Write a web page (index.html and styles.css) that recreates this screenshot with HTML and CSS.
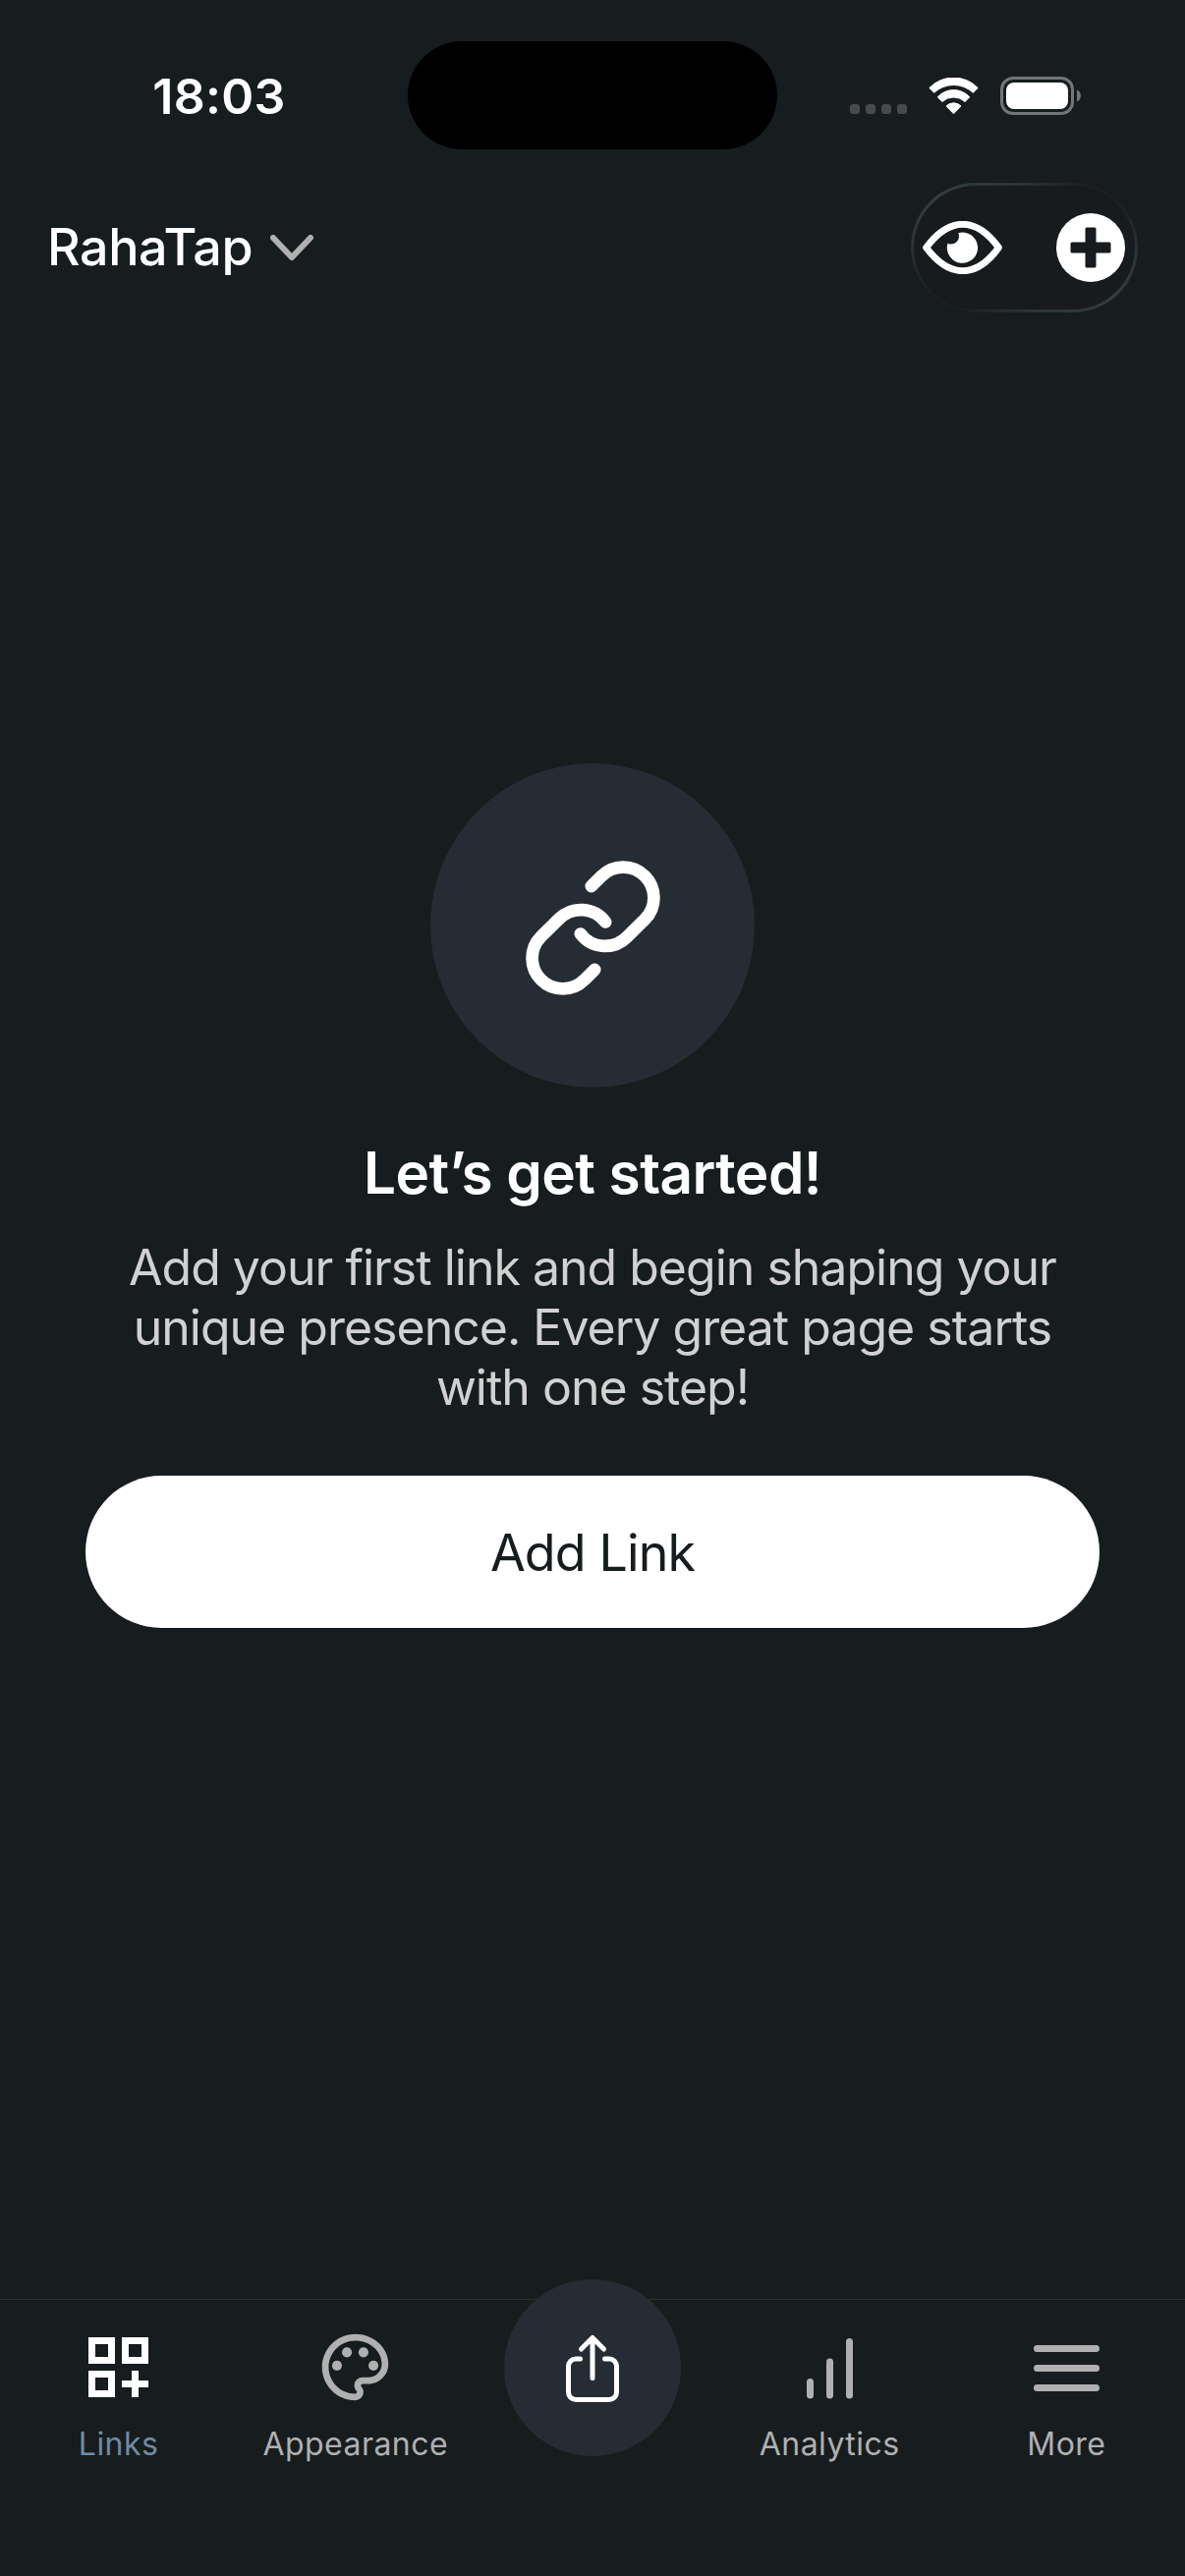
FILE: index.html
```
<!DOCTYPE html>
<html lang="en">

<head>
    <meta charset="UTF-8">
    <meta name="viewport" content="width=device-width, initial-scale=1.0">
    <title>RahaTap</title>
    <link rel="stylesheet" href="styles.css">
</head>

<body>
    <div class="status-bar">
        <div class="time">18:03</div>
        <div class="island"></div>
        <div class="status-icons">
            <div class="signal">
                <span></span><span></span><span></span><span></span>
            </div>
            <svg class="wifi" viewBox="0 0 51 38" fill="#fff" stroke="#fff" stroke-width="1" stroke-linejoin="round">
                <path d="M0.8 10.5A34.3 34.3 0 0 1 50.2 10.5L45.3 15.3A29 29 0 0 0 5.7 15.3Z" />
                <path d="M9.2 19.8A22 22 0 0 1 41.8 19.8L37 24.5A17 17 0 0 0 14 24.5Z" />
                <path d="M18 29A10.5 10.5 0 0 1 33 29L25.5 36.7Z" />
            </svg>
            <svg class="battery" viewBox="0 0 83 39">
                <rect x="1.5" y="1.5" width="72" height="36" rx="11.5" fill="none" stroke="#727577" stroke-width="3" />
                <rect x="6" y="6" width="63" height="27" rx="8" fill="#fff" />
                <path d="M78 13.5C83.3 15.5 83.3 23.5 78 25.5Z" fill="#727577" />
            </svg>
        </div>
    </div>

    <header class="header">
        <button class="account">
            RahaTap
            <svg class="chevron" viewBox="0 0 44 27">
                <path d="M3 3L22 23L41 3" fill="none" stroke="#b0b0b0" stroke-width="6" stroke-linecap="round" stroke-linejoin="round" />
            </svg>
        </button>
        <div class="actions">
            <svg class="eye" viewBox="87 165 243 162">
                <path d="M98 246C133 199 170 175 209 175S285 199 319 246C285 293 248 317 209 317S133 293 98 246Z" fill="none" stroke="#fff" stroke-width="21" stroke-linejoin="round" />
                <path d="M196 201A47 47 0 1 1 163 234C185 240 204 224 196 201Z" fill="#fff" />
            </svg>
            <svg class="plus" viewBox="0 0 70 70">
                <circle cx="35" cy="35" r="35" fill="#fff" />
                <rect x="14.5" y="29.5" width="41" height="11" rx="1.5" fill="#171b1d" />
                <rect x="29.5" y="14.5" width="11" height="41" rx="1.5" fill="#171b1d" />
            </svg>
        </div>
    </header>

    <main class="empty-state">
        <div class="link-circle">
            <svg viewBox="344 349 410 410" fill="none" stroke="#fff" stroke-width="38" stroke-linecap="round">
                <path d="M544 427L575 396A93.3 93.3 0 0 1 707 528L652 582A94 94 0 0 1 511 572" />
                <path d="M554 681L523 712A93.3 93.3 0 0 1 391 580L446 526A94 94 0 0 1 587 536" />
            </svg>
        </div>
        <h1>Let’s get started!</h1>
        <p>Add your first link and begin shaping your<br>unique presence. Every great page starts<br>with one step!</p>
        <button class="add-link">Add Link</button>
    </main>

    <nav class="tab-bar">
        <a class="tab active">
            <svg viewBox="0 0 81 81" fill="none" stroke="#fff" stroke-width="7">
                <path d="M13.5 13.5h20v20h-20zM47.5 13.5h20v20h-20zM13.5 47.5h20v20h-20zM44 57.5h27M57.5 44v27" />
            </svg>
            <span>Links</span>
        </a>
        <a class="tab">
            <svg viewBox="0 0 24 24" fill="#b0b0b0">
                <path d="M12 22C6.49 22 2 17.51 2 12S6.49 2 12 2s10 4.04 10 9c0 3.31-2.69 6-6 6h-1.77c-.28 0-.5.22-.5.5 0 .12.05.23.13.33.41.47.64 1.06.64 1.67A2.5 2.5 0 0 1 12 22zm0-18c-4.41 0-8 3.59-8 8s3.59 8 8 8c.28 0 .5-.22.5-.5a.54.54 0 0 0-.14-.35c-.41-.46-.63-1.05-.63-1.65a2.5 2.5 0 0 1 2.5-2.5H16c2.21 0 4-1.79 4-4 0-3.86-3.59-7-8-7z" />
                <circle cx="6.5" cy="11.5" r="1.5" />
                <circle cx="9.5" cy="7.5" r="1.5" />
                <circle cx="14.5" cy="7.5" r="1.5" />
                <circle cx="17.5" cy="11.5" r="1.5" />
            </svg>
            <span>Appearance</span>
        </a>
        <a class="tab share">
            <div class="share-circle">
                <svg viewBox="0 0 60 75" fill="none" stroke="#fff" stroke-width="5" stroke-linecap="round" stroke-linejoin="round">
                    <path d="M17.5 28H13A7.5 7.5 0 0 0 5.5 35.5V62A7.5 7.5 0 0 0 13 69.5H47A7.5 7.5 0 0 0 54.5 62V35.5A7.5 7.5 0 0 0 47 28H42.5" />
                    <path d="M30 8V47.5M18.5 18L30 6.5L41.5 18" />
                </svg>
            </div>
        </a>
        <a class="tab">
            <svg viewBox="0 0 81 81" fill="none" stroke="#b0b0b0" stroke-width="7" stroke-linecap="round">
                <path d="M20.5 55.5V69M40.5 35V69M60.5 14.5V69" />
            </svg>
            <span>Analytics</span>
        </a>
        <a class="tab">
            <svg viewBox="0 0 81 81" fill="none" stroke="#b0b0b0" stroke-width="7" stroke-linecap="round">
                <path d="M10.5 21.5H70.5M10.5 41.5H70.5M10.5 61.5H70.5" />
            </svg>
            <span>More</span>
        </a>
    </nav>
</body>

</html>
```
FILE: styles.css
```
* {
    box-sizing: border-box;
}

body {
    margin: 0;
    width: 1206px;
    height: 2622px;
    display: flex;
    flex-direction: column;
    font-family: Inter, 'Liberation Sans', sans-serif;
    background-color: #171c1e;
    color: #fff;
    overflow: hidden;
}

button {
    border: none;
    font-family: inherit;
    cursor: pointer;
}

.status-bar {
    display: grid;
    grid-template-columns: 415px 376px 415px;
    align-items: center;
    height: 152px;
    padding-top: 42px;
}

.time {
    padding: 2px 0 0 31px;
    text-align: center;
    font-size: 50px;
    font-weight: 600;
    line-height: 60px;
    letter-spacing: 0.3px;
}

.island {
    height: 110px;
    border-radius: 55px;
    background-color: #000;
}

.status-icons {
    display: flex;
    align-items: flex-end;
    padding: 1px 0 0 74px;
}

.signal {
    display: flex;
    gap: 6px;
    margin: 0 22px 1px 0;
}

.signal span {
    width: 10px;
    height: 10px;
    border-radius: 3px;
    background-color: #47494c;
}

.wifi {
    width: 51px;
    height: 38px;
    margin-right: 22px;
}

.battery {
    width: 83px;
    height: 39px;
}

.header {
    display: flex;
    justify-content: space-between;
    align-items: center;
    height: 132px;
    margin-top: 34px;
    padding: 0 48px;
}

.account {
    display: flex;
    align-items: center;
    gap: 18px;
    padding: 0;
    background: none;
    color: #fff;
    font-size: 52px;
    font-weight: 500;
    line-height: 62px;
    letter-spacing: -0.4px;
}

.chevron {
    width: 44px;
    height: 27px;
}

/* glass edge, fades out at top right and bottom left */
.actions {
    display: flex;
    align-items: center;
    justify-content: space-between;
    width: 231px;
    height: 132px;
    padding: 0 10px 0 9px;
    border: 3px solid transparent;
    border-radius: 66px;
    background:
        linear-gradient(#171b1d, #171b1d) padding-box,
        linear-gradient(to top right, #1b1f22 12%, #2c3438 27%, #343d42 50%, #2c3438 73%, #1b1f22 88%) border-box;
}

.eye {
    width: 81px;
    height: 54px;
}

.plus {
    width: 70px;
    height: 70px;
}

.empty-state {
    flex: 1;
    display: flex;
    flex-direction: column;
    align-items: center;
    padding: 459px 87px 0;
}

.link-circle {
    display: flex;
    align-items: center;
    justify-content: center;
    width: 330px;
    height: 330px;
    padding: 5px 0 0;
    border-radius: 50%;
    background-color: #262c33;
}

.link-circle svg {
    width: 137px;
    height: 137px;
}

h1 {
    margin: 52px 0 0;
    font-size: 58.5px;
    font-weight: 600;
    line-height: 70px;
    letter-spacing: -0.55px;
}

p {
    margin: 31px 0 0;
    text-align: center;
    font-size: 50px;
    line-height: 61px;
    letter-spacing: -1px;
    color: #d1d1d1;
}

.add-link {
    width: 100%;
    height: 155px;
    margin-top: 59px;
    padding: 1px 0 0;
    border-radius: 78px;
    background-color: #fff;
    color: #171c1e;
    font-size: 52px;
    letter-spacing: -0.9px;
}

.tab-bar {
    display: grid;
    grid-template-columns: repeat(5, 1fr);
    height: 282px;
    border-top: 1px solid #2c3135;
}

.tab {
    display: flex;
    flex-direction: column;
    align-items: center;
    padding-top: 28px;
    color: #b0b0b0;
    font-size: 32px;
    line-height: 40px;
    letter-spacing: 0.45px;
}

.tab > svg {
    width: 81px;
    height: 81px;
}

.tab span {
    margin-top: 18px;
}

.tab.active {
    color: #6f8ba4;
}

.tab.share {
    padding-top: 0;
}

.share-circle {
    display: flex;
    align-items: center;
    justify-content: center;
    width: 180px;
    height: 180px;
    margin-top: -21px;
    border-radius: 50%;
    background-color: #262c33;
}

.share-circle svg {
    width: 60px;
    height: 75px;
}
```
